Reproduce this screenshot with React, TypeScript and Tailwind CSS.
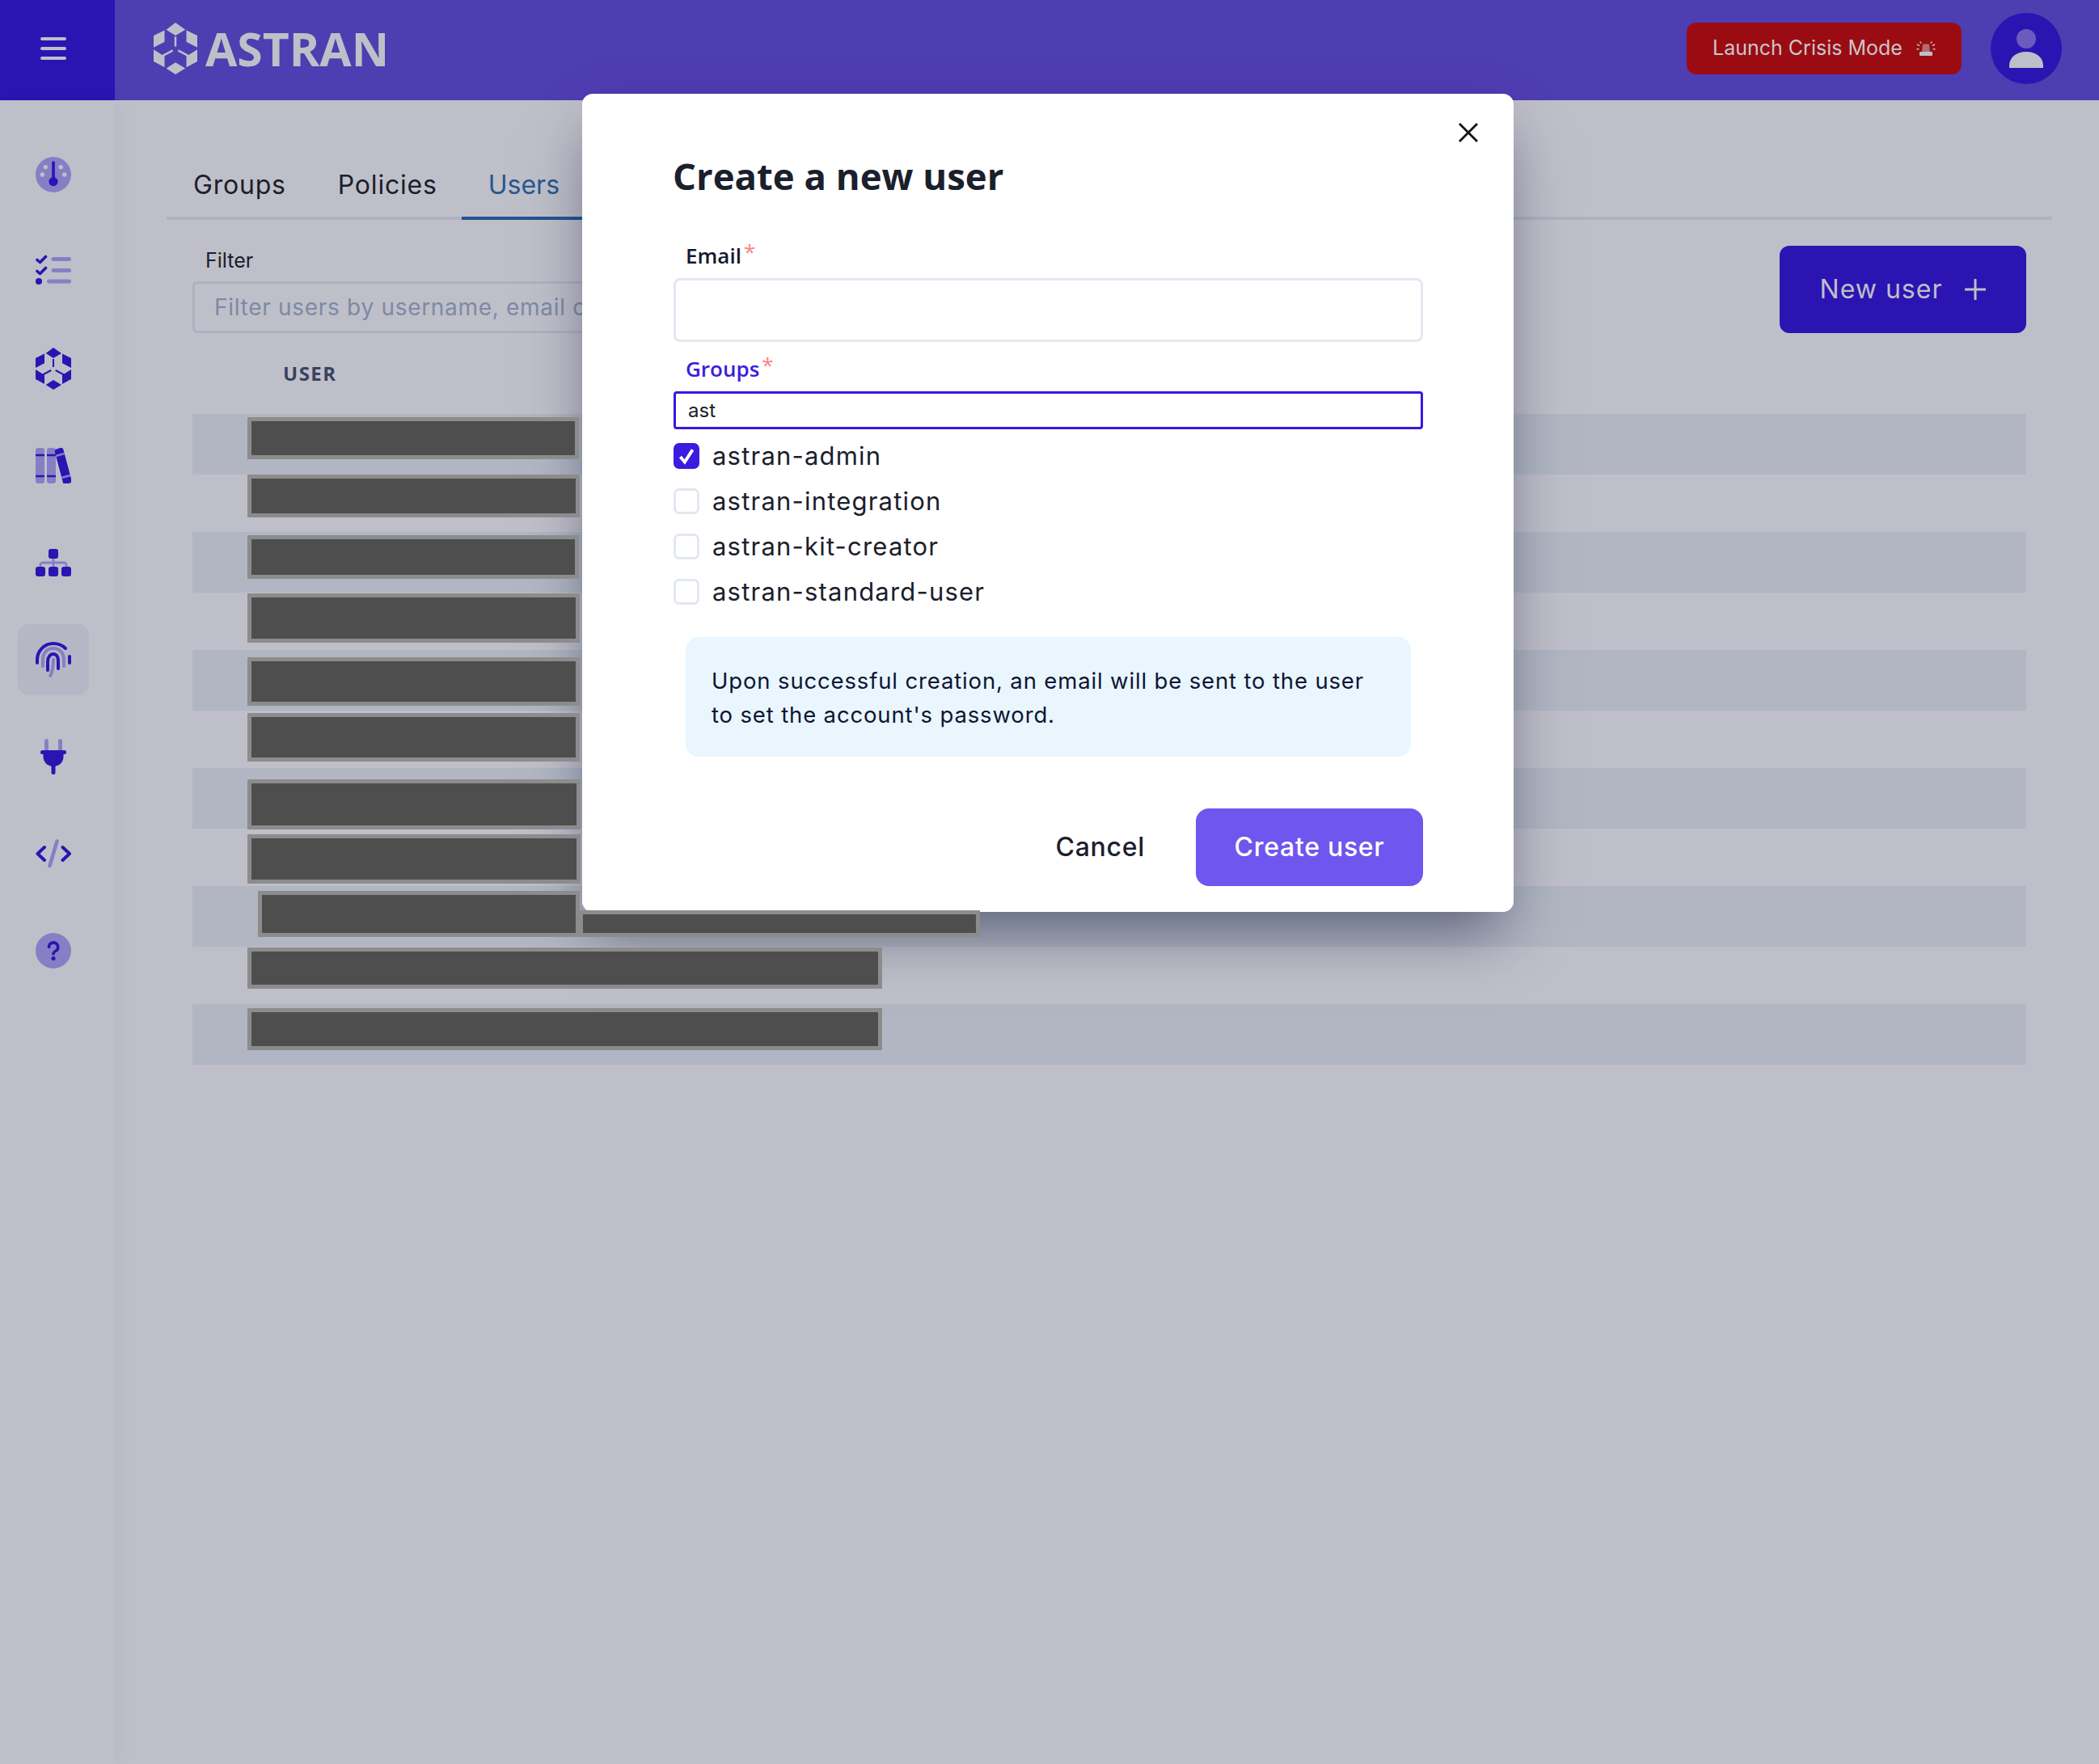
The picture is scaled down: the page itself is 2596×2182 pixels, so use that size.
import type { ReactNode } from 'react'

const body = "font-['Inter','Liberation_Sans',sans-serif]"
const heading = "font-['Open_Sans','Noto_Sans',sans-serif]"
const dark = '#2c14b3'
const light = '#877fc5'
const bg = '#bfbfc9'

const HexLogo = ({ color, className }: { color: string; className: string }) => (
  <svg viewBox="0 0 44 52" className={className} fill={color}>
    <polygon points="22,0 32,7 22,13 12.7,7" />
    <polygon points="0,13 11,7.6 11,19.3 0,25" />
    <polygon points="44,13 33,7.6 33,19.3 44,25" />
    <polygon points="0,27 11,34 11,45 0,39" />
    <polygon points="44,27 33,34 33,45 44,39" />
    <polygon points="22,40 32,46 22,52 12.7,46" />
    <path d="M22 14v10M19.3 28 9 33.5M24.7 28 35 33.5" stroke={color} strokeWidth="2" fill="none" />
  </svg>
)

const navIcons: ReactNode[] = [
  <svg key="gauge" viewBox="0 0 44 44" className="w-[44px] h-[44px]">
    <circle cx="22" cy="22" r="22" fill={light} />
    <g fill={bg}>
      <circle cx="12.3" cy="12.7" r="2.7" />
      <circle cx="31.3" cy="12.7" r="2.7" />
      <circle cx="8.3" cy="22" r="2.7" />
      <circle cx="35.7" cy="22" r="2.7" />
    </g>
    <path d="M22 7v23" stroke={dark} strokeWidth="3.6" strokeLinecap="round" />
    <circle cx="22" cy="30.6" r="5.6" fill={dark} />
  </svg>,
  <svg key="list" viewBox="0 0 44 38" className="w-[44px] h-[38px] -translate-y-[2px]">
    <path d="M2 6.5 5.5 9.5 12.5 2.5M2 20.5 5.5 23.5 12.5 16.5" fill="none" stroke={dark} strokeWidth="3.6" strokeLinecap="round" strokeLinejoin="round" />
    <circle cx="4" cy="33" r="4" fill={dark} />
    <path d="M22 5.5h19.5M22 19.5h19.5M16.5 33h25" stroke={light} strokeWidth="5" strokeLinecap="round" />
  </svg>,
  <HexLogo key="hex" color={dark} className="w-[44px] h-[52px]" />,
  <svg key="books" viewBox="0 0 44 44" className="w-[44px] h-[44px]">
    <rect x="0" y="0" width="11" height="44" rx="3" fill={light} />
    <rect x="14" y="0" width="11" height="44" rx="3" fill={light} />
    <path d="M0 9h11M14 9h11M0 35h11M14 35h11" stroke={dark} strokeWidth="2.6" />
    <g transform="rotate(-15 34 22)">
      <rect x="28.5" y="0" width="11" height="45" rx="3" fill={dark} />
      <path d="M28.5 8h11M28.5 36h11" stroke={light} strokeWidth="2.6" />
    </g>
  </svg>,
  <svg key="org" viewBox="0 0 44 34" className="w-[44px] h-[34px]">
    <path d="M6 23v-3a3 3 0 0 1 3-3h26a3 3 0 0 1 3 3v3M22 11v12" fill="none" stroke={light} strokeWidth="3" />
    <g fill={dark}>
      <rect x="16" y="0" width="12" height="12" rx="3" />
      <rect x="0" y="22" width="12" height="12" rx="3" />
      <rect x="16" y="22" width="12" height="12" rx="3" />
      <rect x="32" y="22" width="12" height="12" rx="3" />
    </g>
  </svg>,
  <svg key="finger" viewBox="0 0 44 44" className="w-[44px] h-[44px]" fill="none" strokeLinecap="round" strokeWidth="4">
    <path d="M2 26v-4C2 11 11 2 22 2c6 0 11 2 15 6M42 18v8M15 35V24c0-5 3-9 7-9s6 4 6 9v9" stroke={dark} />
    <path d="M9 30v-8c0-8 5-14 13-14s13 6 13 14v8M22 22c0 8-1 14-3.6 20" stroke={light} />
  </svg>,
  <svg key="plug" viewBox="0 0 32 44" className="w-[32px] h-[44px]">
    <path d="M7.5 2.5v10M24.5 2.5v10" stroke={light} strokeWidth="5" strokeLinecap="round" />
    <rect x="0" y="14" width="32" height="5" rx="2.5" fill={dark} />
    <path d="M3.5 18h25v4c0 7-5.5 12-12.5 12S3.5 29 3.5 22z" fill={dark} />
    <path d="M16 33v8.5" stroke={dark} strokeWidth="5" strokeLinecap="round" />
  </svg>,
  <svg key="code" viewBox="0 0 44 36" className="w-[44px] h-[36px]" fill="none" strokeLinecap="round" strokeLinejoin="round">
    <path d="M11 10 2.5 18 11 26M33.5 10 42 18 33.5 26" stroke={dark} strokeWidth="4" />
    <path d="M26.5 2.5 17.5 33" stroke={light} strokeWidth="4.5" />
  </svg>,
  <svg key="help" viewBox="0 0 44 44" className="w-[44px] h-[44px]">
    <circle cx="22" cy="22" r="22" fill={light} />
    <path d="M16.5 17.5a5.6 5.6 0 1 1 8.5 4.8c-1.8 1-3 1.7-3 3.7" fill="none" stroke={dark} strokeWidth="3.6" strokeLinecap="round" />
    <circle cx="22" cy="31.5" r="2.6" fill={dark} />
  </svg>,
]

// dark blocks covering the private user names
const redactions = [
  'left-[306px] top-[516px] w-[410px] h-[52px]',
  'left-[306px] top-[587px] w-[411px] h-[53px]',
  'left-[306px] top-[662px] w-[410px] h-[54px]',
  'left-[306px] top-[734px] w-[411px] h-[61px]',
  'left-[306px] top-[813px] w-[411px] h-[60px]',
  'left-[306px] top-[882px] w-[411px] h-[60px]',
  'left-[306px] top-[964px] w-[412px] h-[62px]',
  'left-[306px] top-[1032px] w-[412px] h-[61px]',
  'left-[319px] top-[1102px] w-[398px] h-[57px]',
  'left-[716px] top-[1126px] w-[496px] h-[33px]',
  'left-[306px] top-[1172px] w-[785px] h-[51px]',
  'left-[306px] top-[1247px] w-[785px] h-[52px]',
]

const groups = [
  { name: 'astran-admin', checked: true },
  { name: 'astran-integration', checked: false },
  { name: 'astran-kit-creator', checked: false },
  { name: 'astran-standard-user', checked: false },
]

const rows = Array.from({ length: 11 }, (_, i) => i)

export default function App() {
  return (
    <div className={`${body} relative w-[2596px] h-[2182px] overflow-hidden bg-[#bfbfc9] text-[#1a202c]`}>
      <header className="flex h-[124px] bg-[#4f3db2]">
        <div className="flex w-[142px] items-center bg-[#2c14b3] pb-[4px] pl-[50px]">
          <svg viewBox="0 0 32 28" className="w-[32px] h-[28px]">
            <path d="M2 2h28M2 14h28M2 26h28" stroke={bg} strokeWidth="4" strokeLinecap="round" />
          </svg>
        </div>
        <div className="flex flex-1 items-center pb-[4px] pl-[48px] pr-[46px]">
          <HexLogo color={bg} className="w-[54px] h-[64px]" />
          <span className={`${heading} ml-[10px] text-[57px] leading-none font-bold text-[#bfbfc9]`}>ASTRAN</span>
          <button className="ml-auto flex h-[64px] w-[340px] items-center rounded-[12px] bg-[#9b0c12] pl-[32px] text-[25px] text-[#c9c5cc]">
            Launch Crisis Mode
            <svg viewBox="0 0 24 18" className="ml-[17px] w-[24px] h-[18px]">
              <path d="M7 14 8 3.5h8L17 14z" fill="#bfbfc9" fillOpacity="0.55" />
              <rect x="4" y="13" width="16" height="5" rx="1" fill={bg} />
              <path d="M1 4l3 1.5M0.5 10l3-0.5M23 4l-3 1.5M23.5 10l-3-0.5M4.5 0.5l1.5 2M19.5 0.5 18 2.5" stroke={bg} strokeWidth="1.4" />
            </svg>
          </button>
          <div className="ml-[36px] flex h-[88px] w-[88px] items-center justify-center rounded-full bg-[#2c14b3]">
            <svg viewBox="0 0 88 88" className="w-[88px] h-[88px]">
              <circle cx="44" cy="32" r="12" fill="#6b5bbf" />
              <path d="M23 68v-3c0-10 9-17 21-17s21 7 21 17v3z" fill={bg} />
            </svg>
          </div>
        </div>
      </header>

      <div className="flex h-[2058px]">
        <aside className="flex w-[142px] flex-col gap-[32px] pl-[22px] pt-[48px] shadow-[6px_0_24px_rgba(0,0,0,0.03)]">
          {navIcons.map((icon, i) => (
            <div
              key={i}
              className={`flex h-[88px] w-[88px] items-center justify-center rounded-[14px] ${i === 5 ? 'bg-[#b7b6c4]' : ''}`}>
              {icon}
            </div>
          ))}
        </aside>

        <main className="flex-1 pl-[64px] pr-[58px] pt-[52px]">
          <div className="flex h-[96px] border-b-[4px] border-[#adb2c1] text-[32px]">
            <div className="-mb-[4px] flex items-center px-[33px] pt-[10px] tracking-[0.8px]">Groups</div>
            <div className="-mb-[4px] -ml-[2px] flex items-center px-[33px] pt-[10px] tracking-[0.8px]">Policies</div>
            <div className="-mb-[4px] -ml-[3px] flex items-center border-b-[4px] border-[#225593] px-[33px] pt-[14px] text-[#28598f]">Users</div>
          </div>

          <div className="flex items-end justify-between pl-[32px] pr-[32px] pt-[32px]">
            <div>
              <div className="pl-[16px] text-[25px] leading-[36px]">Filter</div>
              <div className="mt-[8px] flex h-[64px] w-[900px] items-center rounded-[6px] border-[3px] border-[#adb2c1] pl-[24px] text-[28px] tracking-[0.7px] text-[#7d8aa4]">
                Filter users by username, email or group
              </div>
            </div>
            <button className="flex h-[108px] w-[305px] items-center justify-center gap-[28px] rounded-[12px] bg-[#2c14b3] text-[32px] tracking-[1px] text-[#bfbfc9]">
              New user
              <svg viewBox="0 0 26 26" className="w-[26px] h-[26px]">
                <path d="M13 1v24M1 13h24" stroke={bg} strokeWidth="3" strokeLinecap="round" />
              </svg>
            </button>
          </div>

          <div className="px-[32px]">
            <div className={`${heading} flex h-[100px] items-center pl-[112px] text-[24px] font-bold tracking-[1.5px] text-[#374360]`}>USER</div>
            {rows.map(i => (
              <div key={i} className={i % 2 === 0 ? 'h-[75px] bg-[#b1b6c2]' : 'h-[71px]'} />
            ))}
          </div>
        </main>
      </div>

      <div className="absolute left-[720px] top-[116px] w-[1152px] rounded-[13px] bg-white pb-[32px] pl-[113px] pr-[112px] pt-[72px] shadow-[0_36px_70px_-14px_rgba(20,24,60,0.55)]">
        <button className="absolute right-[44px] top-[36px]">
          <svg viewBox="0 0 24 24" className="w-[24px] h-[24px]">
            <path d="M1 1l22 22M23 1 1 23" stroke="#111" strokeWidth="2.8" />
          </svg>
        </button>
        <h2 className={`${heading} -ml-[1px] h-[60px] text-[45.5px] leading-[58px] font-bold text-[#1a202c]`}>Create a new user</h2>

        <label className={`${heading} mt-[50px] block h-[36px] pl-[15px] text-[26px] leading-[36px] font-semibold text-[#14182e]`}>
          Email<span className="relative -top-[5px] ml-[3px] font-normal text-[#fc8181]">*</span>
        </label>
        <input className="mt-[10px] block h-[79px] w-full rounded-[8px] border-[3px] border-[#e2e8f0] bg-white" />

        <label className={`${heading} mt-[15px] block h-[36px] pl-[15px] text-[26px] leading-[36px] font-semibold text-[#3d1be0]`}>
          Groups<span className="relative -top-[5px] ml-[3px] font-normal text-[#fc8181]">*</span>
        </label>
        <div className="mt-[10px] flex h-[47px] items-center rounded-[4px] border-[3px] border-[#3a17e0] pl-[15px] text-[24px]">ast</div>

        <div className="mt-[17px] flex flex-col gap-[24px]">
          {groups.map(g => (
            <div key={g.name} className="flex h-[32px] items-center gap-[16px] text-[31px] tracking-[1.2px] text-[#1a202c]">
              {g.checked ? (
                <span className="flex h-[32px] w-[32px] items-center justify-center rounded-[7px] bg-[#3c1ae0]">
                  <svg viewBox="0 0 24 24" className="w-[26px] h-[26px]">
                    <path d="M5 13l5 6L19 5" fill="none" stroke="white" strokeWidth="3.6" />
                  </svg>
                </span>
              ) : (
                <span className="h-[32px] w-[32px] rounded-[7px] border-[3px] border-[#e2e8f0]" />
              )}
              {g.name}
            </div>
          ))}
        </div>

        <div className="mx-[15px] mt-[40px] h-[148px] rounded-[16px] bg-[#e9f6fe] px-[32px] pt-[33px] text-[27.5px] leading-[42px] tracking-[0.85px] text-[#0f1533]">
          Upon successful creation, an email will be sent to the user
          <br />
          to set the account's password.
        </div>

        <div className="mt-[64px] flex items-center justify-end">
          <button className="text-[32px] font-medium tracking-[0.7px] text-[#1a202c]">Cancel</button>
          <button className="ml-[63px] h-[96px] w-[281px] rounded-[16px] bg-[#6e56ee] text-[32px] font-medium tracking-[0.7px] text-white">Create user</button>
        </div>
      </div>

      {redactions.map(pos => (
        <div key={pos} className={`absolute ${pos} border-[5px] border-[#8c8c8c] bg-[#4e4e4e]`} />
      ))}
    </div>
  )
}
